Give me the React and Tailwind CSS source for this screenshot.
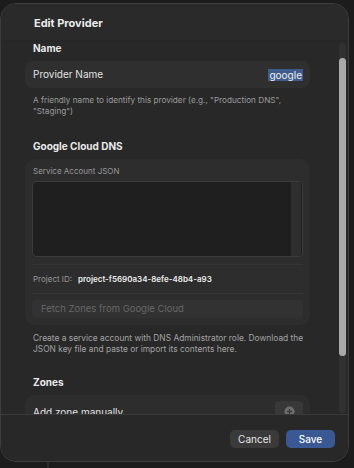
import React from "react";

export default function App() {
  return (
    <div className="w-[354px] h-[468px] bg-[#1c1c1c] pt-[3px] relative overflow-hidden" style={{ fontFamily: "Inter, 'Liberation Sans', sans-serif" }}>
      <div className="absolute left-[47px] top-[460px] w-[2px] h-[8px] bg-[#2b2b2b]" />
      <div className="relative w-[349px] h-[459px] rounded-[16px] border border-[#3d3d3d] bg-[#282828] flex flex-col overflow-hidden">
        {/* header */}
        <div className="h-[37px] shrink-0 flex items-center pl-[33px] pt-[2px] border-b border-[#262626] bg-[#2a2a2a]">
          <span className="text-[11px] font-bold text-[#ececec]">Edit Provider</span>
        </div>

        {/* scroll area */}
        <div className="flex-1 overflow-hidden relative">
          <div className="pl-[24px] w-[309px] pt-[1px] flex flex-col">
            <div className="h-[12px] flex items-center pl-[8px] text-[10px] font-bold text-[#e8e8e8]">Name</div>
            <div className="mt-[7px] h-[27px] rounded-[8px] bg-[#2f2f2f] flex items-center justify-between pl-[8px] pr-[7px]">
              <span className="text-[10px] text-[#e2e2e2]">Provider Name</span>
              <span className="text-[10px] leading-[12px] text-[#f0f0f0] bg-[#3f5b8c] px-[1px]">google</span>
            </div>
            <div className="mt-[7px] pl-[8px] pr-[10px] text-[8.2px] leading-[11px] text-[#9b9b9b]">
              A friendly name to identify this provider (e.g., "Production DNS", "Staging")
            </div>
            <div className="mt-[23px] h-[12px] flex items-center pl-[8px] text-[10px] font-bold text-[#e8e8e8]">Google Cloud DNS</div>
            <div className="mt-[7px] rounded-[10px] bg-[#2d2d2d] px-[7px] pt-[7px] pb-[7px] flex flex-col">
              <div className="h-[10px] flex items-center pl-[1px] text-[8px] text-[#979797]">Service Account JSON</div>
              <div className="mt-[5px] h-[76px] rounded-[4px] border border-[#3b3b3b] bg-[#1f1f1f] flex justify-end">
                <div className="w-[10px] mr-[1px] bg-[#2e2e2e] rounded-r-[3px]" />
              </div>
              <div className="mt-[7px] h-px bg-[#363636]" />
              <div className="h-[28px] flex items-center pl-[1px] gap-[6px]">
                <span className="text-[8px] text-[#979797]">Project ID:</span>
                <span className="text-[8px] font-semibold text-[#ececec]">project-f5690a34-8efe-48b4-a93</span>
              </div>
              <div className="h-px bg-[#363636]" />
              <div className="mt-[6px] h-[18px] rounded-[4px] bg-[#323232] flex items-center pl-[9px] text-[9.5px] text-[#676767]">
                Fetch Zones from Google Cloud
              </div>
            </div>
            <div className="mt-[8px] pl-[8px] w-[290px] text-[8.4px] leading-[10.5px] text-[#a3a3a3]">
              Create a service account with DNS Administrator role. Download the JSON key file and paste or import its contents here.
            </div>
            <div className="mt-[22px] h-[12px] flex items-center pl-[8px] text-[10px] font-bold text-[#e8e8e8]">Zones</div>
            <div className="mt-[7px] h-[40px] rounded-[10px] bg-[#2d2d2d] flex items-start justify-between pl-[8px] pr-[7px] pt-[7px]">
              <span className="mt-[3px] text-[10px] text-[#e2e2e2]">Add zone manually</span>
              <div className="w-[28px] h-[20px] rounded-[4px] bg-[#383838] flex items-center justify-center mt-[-1px]">
                <svg width="11" height="11" viewBox="0 0 12 12">
                  <circle cx="6" cy="6" r="5.5" fill="#6e6e6e" />
                  <path d="M6 3.2v5.6M3.2 6h5.6" stroke="#3a3a3a" strokeWidth="1.4" />
                </svg>
              </div>
            </div>
          </div>
          {/* scrollbar */}
          <div className="absolute left-[338px] top-[2px] w-[7px] h-[370px] rounded-full bg-[#313131]" />
          <div className="absolute left-[338px] top-[17px] w-[7px] h-[298px] rounded-full bg-[#a9a9a9]" />
        </div>

        {/* footer */}
        <div className="h-[47px] shrink-0 border-t border-[#3a3a3a] bg-[#282828] flex items-start justify-end gap-[7px] pr-[13px] pt-[15px]">
          <button className="w-[49px] h-[18px] rounded-[5px] bg-[#3a3a3a] text-[10px] text-[#e6e6e6] flex items-center justify-center">Cancel</button>
          <button className="w-[49px] h-[18px] rounded-[5px] bg-[#3a5894] text-[10px] font-medium text-white flex items-center justify-center">Save</button>
        </div>
      </div>
    </div>
  );
}
